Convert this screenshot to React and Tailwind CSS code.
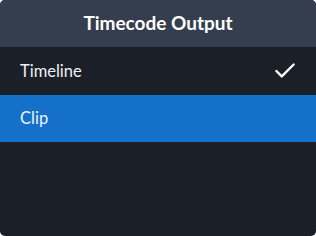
import React from 'react';
import { Check } from 'lucide-react';

const items = [
  { label: 'Timeline', checked: true, active: false },
  { label: 'Clip', checked: false, active: true },
];

export default function App() {
  return (
    <div className="w-[316px] h-[236px] bg-[#1b1f27] rounded-[5px] overflow-hidden flex flex-col" style={{ fontFamily: 'Lato, "Noto Sans", sans-serif' }}>
      <div className="h-[47px] bg-[#353e4e] flex items-center justify-center">
        <span className="text-white font-bold text-[19px]">Timecode Output</span>
      </div>
      {items.map((item) => (
        <div
          key={item.label}
          className={`flex items-center justify-between pl-5 pr-[18px] ${item.active ? 'h-[47px] bg-[#1570c9]' : 'h-[48px]'}`}
        >
          <span className="text-[#eef1f5] text-[16.5px]">{item.label}</span>
          {item.checked && <Check size={26} strokeWidth={2.2} className="text-white" />}
        </div>
      ))}
    </div>
  );
}
